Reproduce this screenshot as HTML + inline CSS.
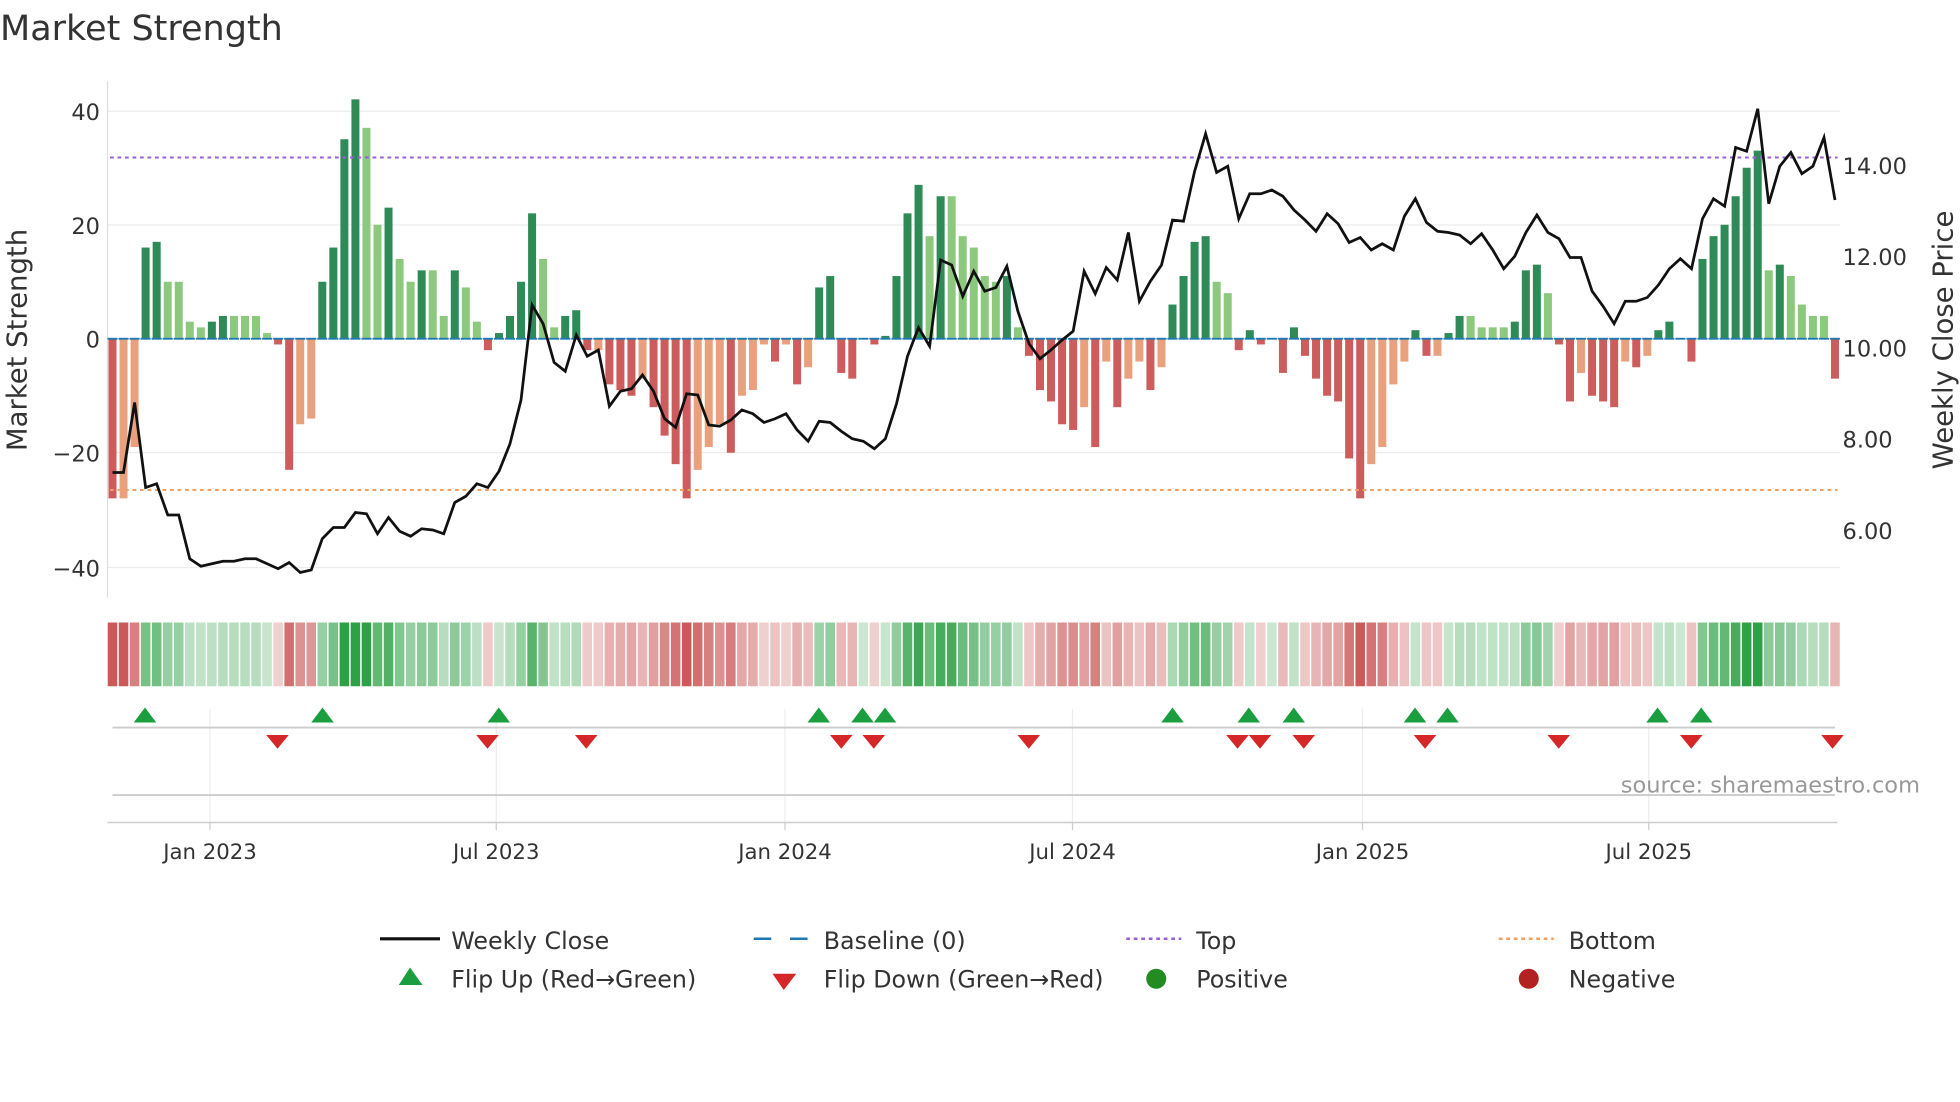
<!DOCTYPE html>
<html><head><meta charset="utf-8">
<style>
html,body{margin:0;padding:0;background:#fff;}
svg{display:block;}
text{font-family:"DejaVu Sans","Liberation Sans",sans-serif;fill:#333;}
</style></head>
<body>
<svg id="s" width="1960" height="1102" viewBox="0 0 1568 881.6" xmlns="http://www.w3.org/2000/svg">
<rect width="1568" height="882" fill="#fff"/>
<text x="0" y="32" font-size="28">Market Strength</text>
<!-- grid -->
<g stroke="#ececec" stroke-width="1">
<line x1="86" x2="1472" y1="89" y2="89"/><line x1="86" x2="1472" y1="180" y2="180"/>
<line x1="86" x2="1472" y1="271" y2="271"/><line x1="86" x2="1472" y1="362" y2="362"/>
<line x1="86" x2="1472" y1="454" y2="454"/>
</g>
<line x1="86" x2="86" y1="65" y2="478" stroke="#ddd"/>
<g font-size="18" text-anchor="end">
<text x="80" y="96">40</text><text x="80" y="187">20</text><text x="80" y="278">0</text>
<text x="80" y="369">−20</text><text x="80" y="461">−40</text>
</g>
<g font-size="18">
<text x="1474" y="139">14.00</text><text x="1474" y="212">12.00</text><text x="1474" y="285">10.00</text>
<text x="1474" y="358">8.00</text><text x="1474" y="431">6.00</text>
</g>
<text font-size="22" transform="translate(21,272) rotate(-90)" text-anchor="middle">Market Strength</text>
<text font-size="22" transform="translate(1562,272) rotate(-90)" text-anchor="middle">Weekly Close Price</text>
<g id="bars"></g>
<line x1="88" x2="1470" y1="126" y2="126" stroke="#9b5fd6" stroke-width="1.6" stroke-dasharray="3,3"/>
<line x1="88" x2="1470" y1="392" y2="392" stroke="#f0a060" stroke-width="1.6" stroke-dasharray="3,3"/>
<polyline id="price" fill="none" stroke="#111" stroke-width="2.2"/>
<g id="heat"></g>
<!-- flip panel -->
<g stroke="#ececec"><line x1="168" x2="168" y1="567" y2="658"/><line x1="397" x2="397" y1="567" y2="658"/><line x1="628" x2="628" y1="567" y2="658"/><line x1="858" x2="858" y1="567" y2="658"/><line x1="1090" x2="1090" y1="567" y2="658"/><line x1="1319" x2="1319" y1="567" y2="658"/></g>
<line x1="90" x2="1468" y1="582" y2="582" stroke="#ccc" stroke-width="1.5"/>
<line x1="90" x2="1468" y1="636" y2="636" stroke="#ccc" stroke-width="1.5"/>
<line x1="86" x2="1470" y1="658" y2="658" stroke="#ccc" stroke-width="1.2"/>
<g id="flips"></g>
<text x="1536" y="634" font-size="18" text-anchor="end" style="fill:#999">source: sharemaestro.com</text>
<g font-size="17" text-anchor="middle">
<text x="168" y="687">Jan 2023</text><text x="397" y="687">Jul 2023</text><text x="628" y="687">Jan 2024</text>
<text x="858" y="687">Jul 2024</text><text x="1090" y="687">Jan 2025</text><text x="1319" y="687">Jul 2025</text>
</g>
<g stroke="#ccc"><line x1="168" x2="168" y1="658" y2="664"/><line x1="397" x2="397" y1="658" y2="664"/><line x1="628" x2="628" y1="658" y2="664"/><line x1="858" x2="858" y1="658" y2="664"/><line x1="1090" x2="1090" y1="658" y2="664"/><line x1="1319" x2="1319" y1="658" y2="664"/></g>
<!-- legend -->
<g font-size="19">
<line x1="304" x2="352" y1="751" y2="751" stroke="#111" stroke-width="2.5"/><text x="361" y="759">Weekly Close</text>
<line x1="603" x2="617" y1="751" y2="751" stroke="#1f77b4" stroke-width="2"/><line x1="632" x2="646" y1="751" y2="751" stroke="#1f77b4" stroke-width="2"/><text x="659" y="759">Baseline (0)</text>
<line x1="901" x2="945" y1="751" y2="751" stroke="#9b5fd6" stroke-width="2" stroke-dasharray="3,3"/><text x="957" y="759">Top</text>
<line x1="1199" x2="1243" y1="751" y2="751" stroke="#f0a060" stroke-width="2" stroke-dasharray="3,3"/><text x="1255" y="759">Bottom</text>
<polygon points="328,774 319,788 338,788" fill="#1a9e3f"/><text x="361" y="790">Flip Up (Red→Green)</text>
<polygon points="618,779 637,779 627,792" fill="#d62728"/><text x="659" y="790">Flip Down (Green→Red)</text>
<circle cx="925" cy="783" r="8" fill="#228b22"/><text x="957" y="790">Positive</text>
<circle cx="1223" cy="783" r="8" fill="#b22222"/><text x="1255" y="790">Negative</text>
</g>
</svg>
<script>
var v=[-28,-28,-19,16,17,10,10,3,2,3,4,4,4,4,1,-1,-23,-15,-14,10,16,35,42,37,20,23,14,10,12,12,4,12,9,3,-2,1,4,10,22,14,2,4,5,-2,-2,-8,-9,-10,-7,-12,-17,-22,-28,-23,-19,-15,-20,-10,-9,-1,-4,-1,-8,-5,9,11,-6,-7,0,-1,0.5,11,22,27,18,25,25,18,16,11,10,11,2,-3,-9,-11,-15,-16,-12,-19,-4,-12,-7,-4,-9,-5,6,11,17,18,10,8,-2,1.5,-1,0,-6,2,-3,-7,-10,-11,-21,-28,-22,-19,-8,-4,1.5,-3,-3,1,4,4,2,2,2,3,12,13,8,-1,-11,-6,-10,-11,-12,-4,-5,-3,1.5,3,0,-4,14,18,20,25,30,33,12,13,11,6,4,4,-7];
var p=[378,378,322,390,387,412,412,447,453,451,449,449,447,447,451,455,450,458,456,431,422,422,410,411,427,414,425,429,423,424,427,402,397,387,390,377,355,320,244,259,290,297,268,285,280,325,313,311,300,313,335,342,315,316,340,341,336,328,331,338,335,331,344,353,337,338,345,351,353,359,351,323,285,262,277,208,212,237,217,233,230,213,249,275,287,280,272,265,217,235,214,224,186,241,225,212,176,177,137,107,138,133,175,155,155,152,157,168,176,185,171,179,194,190,200,195,200,173,159,178,185,186,188,195,187,200,215,205,186,172,186,191,206,206,233,245,259,241,241,238,228,215,207,215,175,159,165,118,121,87,163,133,122,139,133,110,160];
var NS="http://www.w3.org/2000/svg";
function el(t,a,par){var e=document.createElementNS(NS,t);for(var k in a)e.setAttribute(k,a[k]);document.getElementById(par).appendChild(e);return e;}
var dx=(1468-90)/156, pts=[];
for(var i=0;i<v.length;i++){
 var x=90+i*dx, val=v[i], prev=i?v[i-1]:0, c;
 if(val>=0) c=(val>prev)?"#2e8b57":"#8cc97e"; else c=(val<prev)?"#cd5c5c":"#e9a07c";
 var y0=271, y1=271-val*4.56;
 el("rect",{x:x-3.2,y:Math.min(y0,y1),width:6.4,height:Math.max(Math.abs(y1-y0),0.5),fill:c},"bars");
 el("line",{x1:x-4,x2:x+4,y1:271,y2:271,stroke:"#1f77b4","stroke-width":1.5},"bars");
 var a=Math.min(1,0.25+Math.abs(val)/40);
 var hc=val>=0?"rgba(46,160,70,"+a+")":"rgba(200,80,80,"+a+")";
 el("rect",{x:x-dx/2+0.6,y:498,width:dx-1.2,height:51,fill:hc},"heat");
 pts.push(x.toFixed(1)+","+p[i]);
}
document.getElementById("price").setAttribute("points",pts.join(" "));
[116,258,399,655,690,708,938,999,1035,1132,1158,1326,1361].forEach(function(x){el("polygon",{points:(x)+",566 "+(x-9)+",578 "+(x+9)+",578",fill:"#1a9e3f"},"flips");});
[222,390,469,673,699,823,990,1008,1043,1140,1247,1353,1466].forEach(function(x){el("polygon",{points:(x-9)+",588 "+(x+9)+",588 "+x+",599",fill:"#d62728"},"flips");});
</script>
</body></html>
